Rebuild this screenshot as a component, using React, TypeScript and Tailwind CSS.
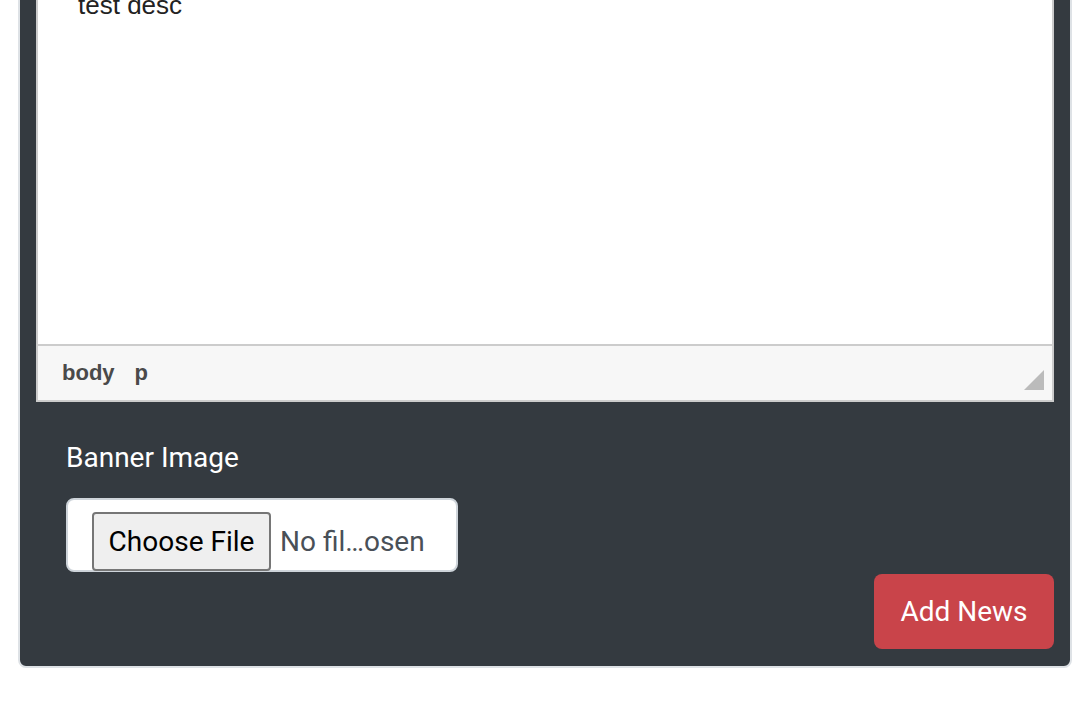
import React from "react";

export default function App() {
  return (
    <div className="w-[1082px] h-[704px] overflow-hidden bg-white">
      <div className="ml-[18px] mr-[10px] mt-[-100px] rounded-[8px] border-2 border-[#dee2e6] bg-[#343a40] pt-[16px] pb-[17px]">
        {/* Editor */}
        <div className="mx-[16px] border-2 border-[#cccccc] bg-white flex flex-col">
          <div
            className="h-[424px] bg-white pl-[40px] pt-[70px]"
            style={{ fontFamily: '"Liberation Sans", Arial, sans-serif' }}
          >
            <p className="text-[26px] leading-[30px] text-[#222222]">test desc</p>
          </div>
          <div
            className="h-[56px] border-t-2 border-[#cccccc] bg-[#f7f7f7] flex items-start pl-[24px]"
            style={{ fontFamily: '"Liberation Sans", Arial, sans-serif' }}
          >
            <span className="text-[22px] leading-[54px] font-bold text-[#4a4a4a]">body</span>
            <span className="ml-[20px] text-[22px] leading-[54px] font-bold text-[#4a4a4a]">p</span>
            <svg
              className="ml-auto mr-[8px] mt-[24px]"
              width="20"
              height="20"
              viewBox="0 0 20 20"
            >
              <polygon points="20,0 20,20 0,20" fill="#bbbbbb" />
            </svg>
          </div>
        </div>

        {/* Form */}
        <div style={{ fontFamily: 'Roboto, "Noto Sans", sans-serif' }}>
          <div className="pl-[46px] mt-[35px]">
            <label className="block text-[28px] leading-[42px] text-white">Banner Image</label>
            <div className="mt-[19px] w-[392px] h-[74px] rounded-[8px] border-2 border-[#ced4da] bg-white flex items-start pl-[24px] pt-[12px]">
              <div className="h-[59px] w-[179px] shrink-0 rounded-[4px] border-2 border-[#767676] bg-[#efefef] flex items-center justify-center text-[28px] text-black">
                Choose File
              </div>
              <span className="ml-[9px] h-[59px] flex items-center text-[28px] text-[#495057] whitespace-nowrap">
                No fil…osen
              </span>
            </div>
          </div>
          <div className="flex justify-end pr-[16px] mt-[2px]">
            <button className="h-[75px] w-[180px] rounded-[8px] bg-[#c9444a] text-white text-[28px] flex items-center justify-center">
              Add News
            </button>
          </div>
        </div>
      </div>
    </div>
  );
}
